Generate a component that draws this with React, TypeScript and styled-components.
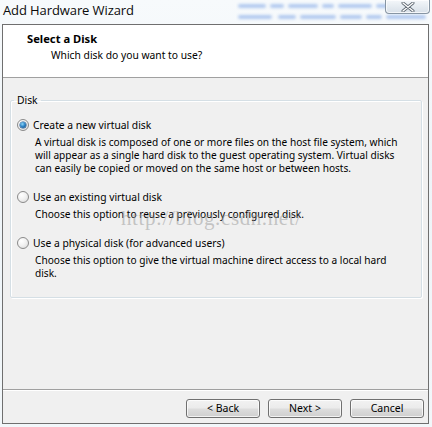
import React from "react";
import styled, { createGlobalStyle } from "styled-components";

const Global = createGlobalStyle`
  html, body { margin: 0; padding: 0; }
  body {
    width: 432px;
    height: 427px;
    overflow: hidden;
    font-family: "Noto Sans", "Open Sans", sans-serif;
    -webkit-font-smoothing: antialiased;
  }
`;

const Page = styled.div`
  position: relative;
  width: 432px;
  height: 427px;
  display: flex;
  flex-direction: column;
  background: linear-gradient(180deg, #f7fafc 0%, #eef4f8 40%, #f2f7fa 100%);
  overflow: hidden;
`;

const TitleBar = styled.div`
  position: relative;
  height: 24px;
  flex-shrink: 0;
  display: flex;
  align-items: flex-start;
  justify-content: space-between;
  padding: 0 3px 0 3px;
  box-sizing: border-box;
`;

const Backdrop = styled.svg`
  position: absolute;
  left: 236px;
  top: 0;
  pointer-events: none;
`;

const Title = styled.div`
  position: relative;
  font-family: "Open Sans", "Noto Sans", sans-serif;
  font-size: 13px;
  line-height: 20px;
  color: #0b0b0b;
  letter-spacing: -0.1px;
`;

const CloseButton = styled.div`
  position: relative;
  width: 45px;
  height: 14px;
  margin-right: -1px;
  box-sizing: border-box;
  border: 1px solid #8795a3;
  border-top: none;
  border-radius: 0 0 4px 4px;
  background: linear-gradient(180deg, #f4f7fa 0%, #e4eaf0 55%, #d8e0e8 100%);
  box-shadow: inset 0 0 0 1px rgba(255, 255, 255, 0.7);
  display: flex;
  align-items: center;
  justify-content: center;
`;

const Frame = styled.div`
  flex: 1;
  margin: 0 3px 3px 2px;
  border: 1px solid #6f6f6f;
  display: flex;
  flex-direction: column;
  background: #f0f0f0;
`;

const Header = styled.div`
  height: 45px;
  flex-shrink: 0;
  background: #ffffff;
  border-bottom: 1px solid #a0a0a0;
  padding: 7px 0 0 24px;
`;

const HeaderTitle = styled.div`
  font-size: 11.2px;
  line-height: 14px;
  font-weight: 700;
  color: #000;
`;

const HeaderSub = styled.div`
  font-size: 10.3px;
  line-height: 14px;
  margin: 2px 0 0 24px;
  color: #000;
`;

const Body = styled.div`
  flex: 1;
  padding: 16px 6px 0 7px;
`;

const GroupBox = styled.fieldset`
  margin: 0;
  padding: 11px 6px 17px 6px;
  border: 1px solid #d5dfe5;
  box-shadow: inset 1px 1px 0 #ffffff, 1px 1px 0 #ffffff;
  border-radius: 2px;
`;

const Legend = styled.legend`
  padding: 0 3px;
  margin-left: -3px;
  font-size: 10.3px;
  line-height: 13px;
  color: #000;
`;

const Option = styled.div<{ $last?: boolean }>`
  margin-bottom: ${(p) => (p.$last ? 0 : 15)}px;
`;

const RadioRow = styled.label`
  display: flex;
  align-items: center;
  gap: 4px;
  height: 14px;
  font-size: 10.3px;
  white-space: nowrap;
  color: #000;
`;

const RadioCircle = styled.span<{ $checked?: boolean }>`
  position: relative;
  width: 12px;
  height: 12px;
  box-sizing: border-box;
  border-radius: 50%;
  border: 1px solid #8a8a8a;
  background: radial-gradient(circle at 35% 30%, #ffffff 0%, #f2f2f2 45%, #d8d8d8 100%);
  flex-shrink: 0;
  display: flex;
  align-items: center;
  justify-content: center;
  &::after {
    content: "";
    display: ${(p) => (p.$checked ? "block" : "none")};
    width: 6px;
    height: 6px;
    border-radius: 50%;
    background: radial-gradient(circle at 40% 35%, #8fd6f7 0%, #2f86c8 45%, #0c3f78 100%);
    box-shadow: 0 0 0 0.5px #1a4f86;
  }
`;

const Desc = styled.div`
  margin: 4px 0 0 18px;
  font-size: 10.15px;
  line-height: 13px;
  white-space: nowrap;
  color: #000;
`;

const Footer = styled.div`
  height: 34px;
  flex-shrink: 0;
  border-top: 1px solid #a0a0a0;
  box-shadow: inset 0 1px 0 #ffffff;
  display: flex;
  justify-content: flex-end;
  align-items: flex-start;
  gap: 8px;
  padding: 9px 4px 0 0;
  box-sizing: border-box;
`;

const Button = styled.button`
  width: 74px;
  height: 19px;
  padding: 0;
  box-sizing: border-box;
  border: 1px solid #707070;
  border-radius: 3px;
  background: linear-gradient(180deg, #f2f2f2 0%, #ebebeb 48%, #dddddd 52%, #cfcfcf 100%);
  box-shadow: inset 0 0 0 1px rgba(255, 255, 255, 0.75);
  font-family: "Noto Sans", "Open Sans", sans-serif;
  font-size: 10.5px;
  line-height: 17px;
  color: #000;
`;

const Watermark = styled.div`
  position: absolute;
  left: 121px;
  top: 206px;
  font-family: "Liberation Serif", serif;
  font-size: 21px;
  letter-spacing: 0.6px;
  color: rgba(150, 150, 150, 0.5);
  pointer-events: none;
`;

const options = [
  {
    label: "Create a new virtual disk",
    checked: true,
    desc: [
      "A virtual disk is composed of one or more files on the host file system, which",
      "will appear as a single hard disk to the guest operating system. Virtual disks",
      "can easily be copied or moved on the same host or between hosts.",
    ],
  },
  {
    label: "Use an existing virtual disk",
    checked: false,
    desc: ["Choose this option to reuse a previously configured disk."],
  },
  {
    label: "Use a physical disk (for advanced users)",
    checked: false,
    desc: [
      "Choose this option to give the virtual machine direct access to a local hard",
      "disk.",
    ],
  },
];

const blurStrokes = [
  { x: 2, y: 4, w: 28 }, { x: 34, y: 4, w: 14 }, { x: 52, y: 4, w: 30 },
  { x: 86, y: 4, w: 12 }, { x: 102, y: 4, w: 34 }, { x: 140, y: 4, w: 40 },
  { x: 2, y: 15, w: 34 }, { x: 42, y: 15, w: 18 }, { x: 64, y: 15, w: 36 },
  { x: 104, y: 15, w: 22 }, { x: 130, y: 15, w: 16 }, { x: 150, y: 15, w: 40 },
];

export default function App() {
  return (
    <Page>
      <Global />
      <TitleBar>
        <Backdrop width="196" height="22" viewBox="0 0 196 22">
          <defs>
            <filter id="bl" x="-10%" y="-50%" width="120%" height="200%">
              <feGaussianBlur stdDeviation="1.5" />
            </filter>
          </defs>
          <g filter="url(#bl)" fill="#5d8ee0" opacity="0.45">
            {blurStrokes.map((s, i) => (
              <rect key={i} x={s.x} y={s.y} width={s.w} height="4" rx="2" />
            ))}
          </g>
        </Backdrop>
        <Title>Add Hardware Wizard</Title>
        <CloseButton>
          <svg width="14" height="10" viewBox="0 0 14 10">
            <path
              d="M2 1 L12 9 M12 1 L2 9"
              stroke="#5c6670"
              strokeWidth="3"
              strokeLinecap="round"
            />
            <path
              d="M2 1 L12 9 M12 1 L2 9"
              stroke="#ffffff"
              strokeWidth="1.4"
              strokeLinecap="round"
            />
          </svg>
        </CloseButton>
      </TitleBar>
      <Frame>
        <Header>
          <HeaderTitle>Select a Disk</HeaderTitle>
          <HeaderSub>Which disk do you want to use?</HeaderSub>
        </Header>
        <Body>
          <GroupBox>
            <Legend>Disk</Legend>
            {options.map((o, i) => (
              <Option key={o.label} $last={i === options.length - 1}>
                <RadioRow>
                  <RadioCircle $checked={o.checked} />
                  {o.label}
                </RadioRow>
                <Desc>
                  {o.desc.map((d) => (
                    <div key={d}>{d}</div>
                  ))}
                </Desc>
              </Option>
            ))}
          </GroupBox>
        </Body>
        <Footer>
          <Button>&lt; Back</Button>
          <Button>Next &gt;</Button>
          <Button>Cancel</Button>
        </Footer>
      </Frame>
      <Watermark>http://blog.csdn.net/</Watermark>
    </Page>
  );
}
